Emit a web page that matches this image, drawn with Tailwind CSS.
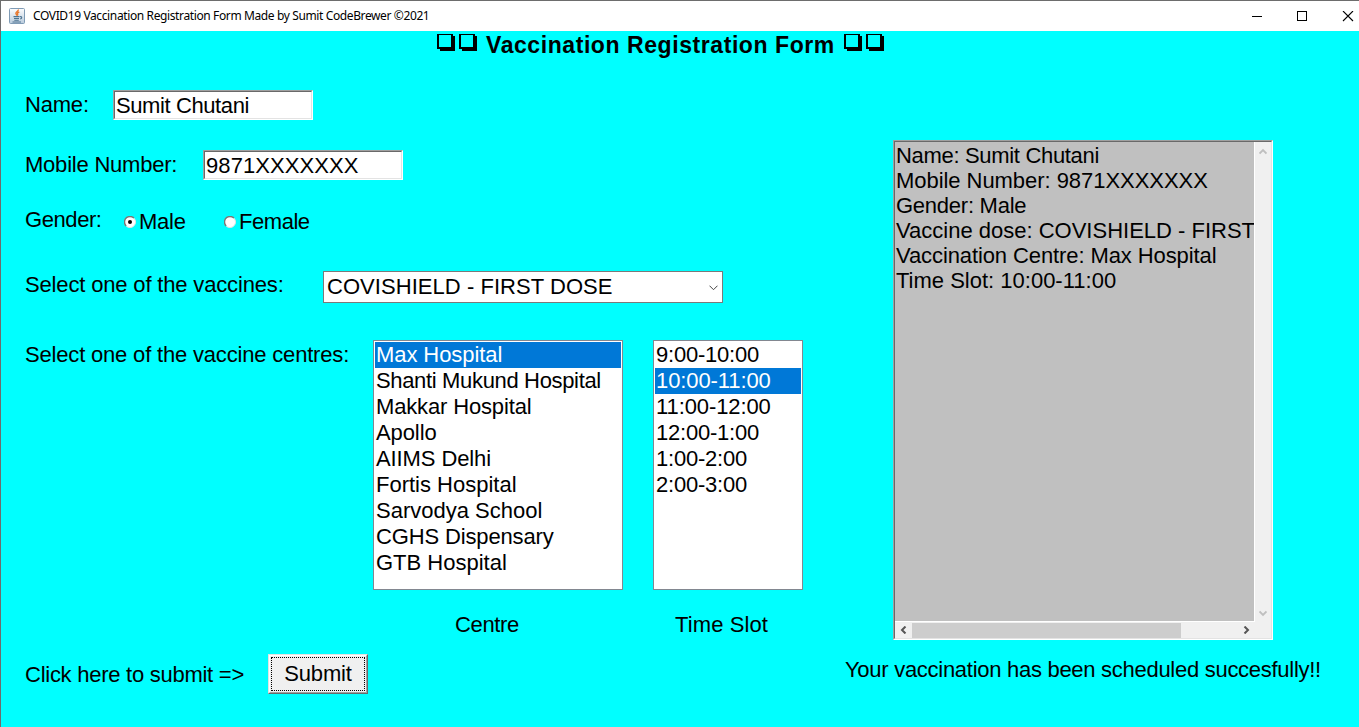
<!DOCTYPE html>
<html lang="en">
<head>
<meta charset="utf-8">
<title>COVID19 Vaccination Registration Form</title>
<script src="https://cdn.jsdelivr.net/npm/@tailwindcss/browser@4"></script>
</head>
<body class="h-[727px] w-[1359px] overflow-hidden bg-[#00ffff] font-['Liberation_Sans',Arial,sans-serif] text-[22px] leading-[30px] whitespace-nowrap text-black">
<div class="flex h-full flex-col border-l border-[#6d6d6d]">
  <header class="flex h-[31px] shrink-0 items-center border-t border-[#6d6d6d] bg-white pl-2">
    <svg class="h-4 w-4" viewBox="0 0 16 16">
      <defs><linearGradient id="g" x1="0" y1="0" x2="0" y2="1"><stop offset="0" stop-color="#fdfdfe"/><stop offset="1" stop-color="#b9cbdc"/></linearGradient></defs>
      <rect x=".5" y=".5" width="15" height="15" rx="1" fill="url(#g)" stroke="#7f9bb5"/>
      <path d="M9.3 1.5c.6 1.6-2.6 2.4-2.400 4 .1.8.9 1.200 1.100 2.200M10.300 4c-1.300.5-2.100 1.100-1.700 2 .3.700.2 1-.3 1.600" fill="none" stroke="#e8762c" stroke-width="1.400"/>
      <path d="M4.500 8.600h6M5 10.500h5M5.300 12.200h4.500M3.500 13.900h8.500M11 8.700c2.200-.4 2.400 1.700.2 2.400" fill="none" stroke="#4c7391" stroke-width="1.050"/>
    </svg>
    <span class="ml-2 font-['Noto_Sans'] text-[12px] leading-[30px] tracking-[-0.38px]">COVID19 Vaccination Registration Form Made by Sumit CodeBrewer ©2021</span>
    <svg class="mr-[5px] ml-auto h-[11px] w-[102px] shrink-0" viewBox="0 0 102 11" fill="none" stroke="#000" shape-rendering="crispEdges">
      <path d="M0 5.500h10M45.500.500h9v9h-9z"/>
      <path d="M91 0l10 10M101 0L91 10" shape-rendering="auto" stroke-width="1.100"/>
    </svg>
  </header>

  <h1 class="flex h-[29px] shrink-0 items-start pl-[435px] font-bold">
    <svg class="mt-[3px] h-[17px] w-[42px]" viewBox="0 0 42 17" shape-rendering="crispEdges"><path fill-rule="evenodd" d="M1 0h16v2h2v15H4v-2H1zM3 1v12h12V1zM23 0h16v2h2v15H26v-2h-3zM25 1v12h12V1z"/></svg>
    <span class="ml-2 w-[349px] text-[23px] leading-7 tracking-[0.57px]">Vaccination Registration Form</span>
    <svg class="mt-[3px] ml-2 h-[17px] w-[42px]" viewBox="0 0 42 17" shape-rendering="crispEdges"><path fill-rule="evenodd" d="M1 0h16v2h2v15H4v-2H1zM3 1v12h12V1zM23 0h16v2h2v15H26v-2h-3zM25 1v12h12V1z"/></svg>
  </h1>

  <main class="flex min-h-0 flex-1">
    <section class="w-[844px] shrink-0 pt-[30px] pl-6">
      <div class="flex h-[30px]">
        <label class="w-[88px] tracking-[-0.2px]">Name:</label>
        <div class="w-[200px] border border-t-[#a0a0a0] border-r-white border-b-white border-l-[#a0a0a0]"><div class="h-[28px] border border-t-[#696969] border-r-[#e3e3e3] border-b-[#e3e3e3] border-l-[#696969] bg-white pl-px leading-[27px] tracking-[-0.4px]">Sumit Chutani</div></div>
      </div>
      <div class="mt-[30px] flex h-[30px]">
        <label class="w-[178px] tracking-[-0.22px]">Mobile Number:</label>
        <div class="w-[200px] border border-t-[#a0a0a0] border-r-white border-b-white border-l-[#a0a0a0]"><div class="h-[28px] border border-t-[#696969] border-r-[#e3e3e3] border-b-[#e3e3e3] border-l-[#696969] bg-white pl-px leading-[27px] tracking-[0.08px]">9871XXXXXXX</div></div>
      </div>
      <div class="mt-[25px] flex h-[30px]">
        <label class="w-[99px] tracking-[-0.42px]">Gender:</label>
        <div class="flex w-[100px] items-center pt-[3px]">
          <svg class="h-3 w-3" viewBox="0 0 12 12"><circle cx="6" cy="6" r="5.500" fill="#fff" stroke="#e3e3e3"/><path d="M2.100 9.900A5.500 5.500 0 0 1 9.900 2.100" fill="none" stroke="#777" stroke-width="1.400"/><circle cx="6" cy="6" r="2"/></svg>
          <span class="ml-[3px] tracking-[-0.25px]">Male</span>
        </div>
        <div class="flex items-center pt-[3px]">
          <svg class="h-3 w-3" viewBox="0 0 12 12"><circle cx="6" cy="6" r="5.500" fill="#fff" stroke="#e3e3e3"/><path d="M2.100 9.900A5.500 5.500 0 0 1 9.900 2.100" fill="none" stroke="#777" stroke-width="1.400"/></svg>
          <span class="ml-[3px] tracking-[-0.45px]">Female</span>
        </div>
      </div>
      <div class="mt-[36px] flex h-[32px]">
        <label class="w-[298px] leading-[28px] tracking-[-0.16px]">Select one of the vaccines:</label>
        <div class="flex w-[400px] items-center justify-between border border-[#7a7a7a] bg-white pr-1 pl-[3px]">
          <span class="tracking-[0.05px]">COVISHIELD - FIRST DOSE</span>
          <svg class="mt-px h-[6px] w-[9px]" viewBox="0 0 9 6" fill="none" stroke="#444"><path d="M.500.700l4 4 4-4"/></svg>
        </div>
      </div>
      <div class="mt-[37px] flex h-[250px]">
        <label class="w-[348px] tracking-[-0.18px]">Select one of the vaccine centres:</label>
        <ul class="w-[250px] border border-[#828790] bg-white p-px leading-[26px]">
          <li class="bg-[#0078d7] pl-px tracking-[-0.08px] text-white">Max Hospital</li>
          <li class="pl-px tracking-[-0.34px]">Shanti Mukund Hospital</li>
          <li class="pl-px tracking-[-0.15px]">Makkar Hospital</li>
          <li class="pl-px tracking-[-0.1px]">Apollo</li>
          <li class="pl-px tracking-[-0.1px]">AIIMS Delhi</li>
          <li class="pl-px">Fortis Hospital</li>
          <li class="pl-px">Sarvodya School</li>
          <li class="pl-px tracking-[-0.14px]">CGHS Dispensary</li>
          <li class="pl-px">GTB Hospital</li>
        </ul>
        <ul class="ml-[30px] w-[150px] border border-[#828790] bg-white p-px leading-[26px]">
          <li class="pl-px tracking-[-0.22px]">9:00-10:00</li>
          <li class="bg-[#0078d7] pl-px tracking-[-0.1px] text-white">10:00-11:00</li>
          <li class="pl-px tracking-[-0.1px]">11:00-12:00</li>
          <li class="pl-px tracking-[-0.22px]">12:00-1:00</li>
          <li class="pl-px tracking-[-0.22px]">1:00-2:00</li>
          <li class="pl-px tracking-[-0.22px]">2:00-3:00</li>
        </ul>
      </div>
      <div class="mt-5 flex h-[30px] pl-[430px]">
        <span class="w-[220px] tracking-[-0.35px]">Centre</span>
        <span class="tracking-[0.1px]">Time Slot</span>
      </div>
      <div class="mt-[14px] flex h-[40px]">
        <label class="w-[243px] leading-[41px] tracking-[-0.26px]">Click here to submit =&gt;</label>
        <button class="h-10 w-[100px] border border-t-[#e3e3e3] border-r-[#696969] border-b-[#696969] border-l-[#e3e3e3] bg-[#f0f0f0]"><span class="flex h-[38px] items-center border border-t-white border-r-[#a0a0a0] border-b-[#a0a0a0] border-l-white p-px"><span class="block h-[34px] w-full border border-dotted border-black leading-[32px] tracking-[-0.2px]">Submit</span></span></button>
      </div>
    </section>

    <aside class="pt-[80px]">
      <div class="ml-[48px] h-[500px] w-[380px] border border-t-[#a0a0a0] border-r-white border-b-white border-l-[#a0a0a0]">
        <div class="grid h-[498px] grid-cols-[360px_16px] grid-rows-[480px_16px] border border-t-[#696969] border-r-[#e3e3e3] border-b-[#e3e3e3] border-l-[#696969] bg-[#f0f0f0]">
          <div class="overflow-hidden border-r border-b border-white bg-[#c0c0c0] pt-px pl-px leading-[25px]">
            <p class="tracking-[-0.32px]">Name: Sumit Chutani</p>
            <p class="tracking-[-0.05px]">Mobile Number: 9871XXXXXXX</p>
            <p class="tracking-[-0.25px]">Gender: Male</p>
            <p>Vaccine dose: COVISHIELD - FIRST DOSE</p>
            <p class="tracking-[-0.1px]">Vaccination Centre: Max Hospital</p>
            <p>Time Slot: 10:00-11:00</p>
          </div>
          <div class="flex flex-col items-center justify-between pt-[6px] pb-[5px]">
            <svg class="h-[7px] w-2" viewBox="0 0 8 7" fill="none" stroke="#bfbfbf" stroke-width="1.900"><path d="M.500 5.500L4 2l3.500 3.500"/></svg>
            <svg class="h-[7px] w-2" viewBox="0 0 8 7" fill="none" stroke="#bfbfbf" stroke-width="1.900"><path d="M.500 1.500L4 5l3.500-3.500"/></svg>
          </div>
          <div class="flex items-center">
            <svg class="h-2 w-[17px]" viewBox="0 0 17 8" fill="none" stroke="#555" stroke-width="2"><path d="M10.500.500L7 4l3.500 3.500"/></svg>
            <div class="h-[15px] w-[269px] bg-[#cdcdcd]"></div>
            <svg class="ml-auto h-2 w-[17px]" viewBox="0 0 17 8" fill="none" stroke="#555" stroke-width="2"><path d="M6.500.500L10 4 6.500 7.500"/></svg>
          </div>
        </div>
      </div>
      <p class="mt-[15px] tracking-[-0.28px]">Your vaccination has been scheduled succesfully!!</p>
    </aside>
  </main>
</div>
</body>
</html>
